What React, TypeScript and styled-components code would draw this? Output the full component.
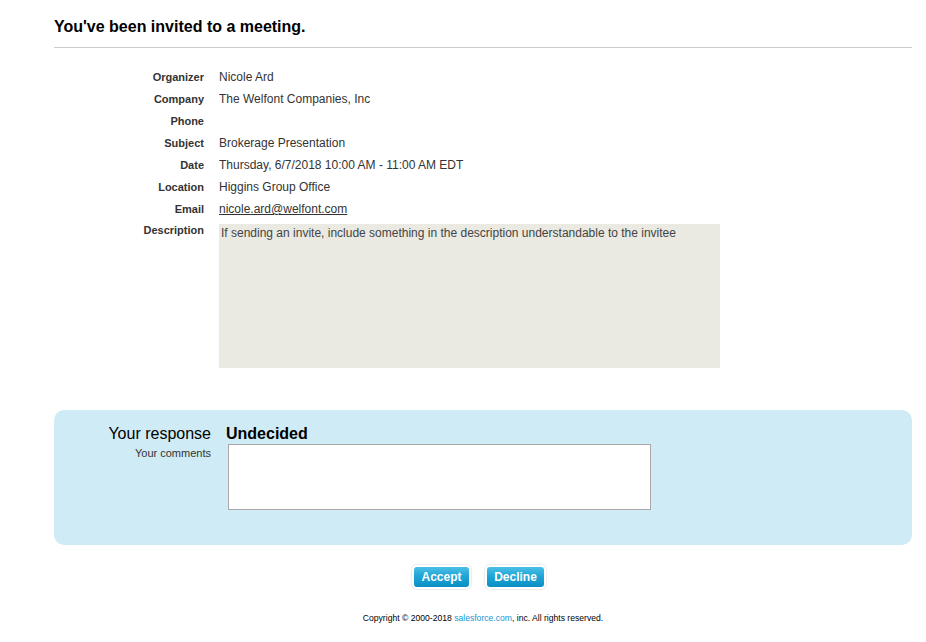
import React from 'react'
import styled, { createGlobalStyle } from 'styled-components'

const GlobalStyle = createGlobalStyle`
    body {
        margin: 0;
        background: #fff;
        font-family: "Liberation Sans", Arial, sans-serif;
        color: #333;
    }
`

const Page = styled.div`
    padding: 0 14px 0 54px;
`

const Heading = styled.h1`
    margin: 0;
    padding: 17px 0 10px;
    font-size: 16px;
    line-height: 20px;
    font-weight: bold;
    color: #000;
    border-bottom: 1px solid #cccccc;
`

const Details = styled.div`
    display: grid;
    grid-template-columns: 150px 1fr;
    column-gap: 15px;
    margin-top: 18px;
`

const Label = styled.div<{ $tall?: boolean }>`
    text-align: right;
    font-size: 11px;
    font-weight: bold;
    color: #333;
    line-height: ${p => (p.$tall ? '14px' : '22px')};
    margin-top: ${p => (p.$tall ? '3px' : '0')};
`

const Value = styled.div`
    font-size: 12px;
    line-height: 22px;
    color: #333;
    min-height: 22px;
`

const EmailLink = styled.a`
    color: #333;
    text-decoration: underline;
`

const DescriptionBox = styled.div`
    margin-top: 4px;
    width: 497px;
    height: 142px;
    padding: 2px 2px 0;
    background: #eae9e2;
    font-size: 12px;
    line-height: 14px;
    color: #444;
`

const ResponsePanel = styled.section`
    margin-top: 42px;
    height: 135px;
    box-sizing: border-box;
    padding-top: 14px;
    background: #cfecf6;
    border-radius: 10px;
    display: grid;
    grid-template-columns: 157px 1fr;
    column-gap: 15px;
    align-content: start;
`

const ResponseLabel = styled.div`
    text-align: right;
    font-size: 16px;
    line-height: 20px;
    color: #000;
`

const ResponseValue = styled.div`
    font-size: 16px;
    line-height: 20px;
    font-weight: bold;
    color: #000;
`

const CommentsLabel = styled.div`
    text-align: right;
    font-size: 11px;
    line-height: 14px;
    padding-top: 2px;
    color: #333;
`

const Comments = styled.textarea`
    margin-left: 2px;
    width: 423px;
    height: 66px;
    box-sizing: border-box;
    border: 1px solid #a9a9a9;
    background: #fff;
    resize: none;
    font-family: "Liberation Sans", Arial, sans-serif;
    font-size: 12px;
`

const Actions = styled.div`
    display: flex;
    justify-content: center;
    gap: 14px;
    margin-top: 20px;
    padding-right: 8px;
`

const Button = styled.button<{ $width: number }>`
    width: ${p => p.$width}px;
    height: 24px;
    padding: 0;
    border: 2px solid #fff;
    border-radius: 5px;
    box-shadow: 0 0 2px rgba(0, 0, 0, 0.25);
    background: linear-gradient(to bottom, #4cc0e6 0%, #20a5d6 45%, #0a8fc6 100%);
    color: #fff;
    font-family: "Liberation Sans", Arial, sans-serif;
    font-size: 12px;
    font-weight: bold;
    cursor: pointer;
`

const Footer = styled.footer`
    margin-top: 23px;
    text-align: center;
    font-size: 8.6px;
    line-height: 12px;
    color: #000;
    a {
        color: #1797d4;
        text-decoration: none;
    }
`

const details: [string, React.ReactNode][] = [
    ['Organizer', 'Nicole Ard'],
    ['Company', 'The Welfont Companies, Inc'],
    ['Phone', ''],
    ['Subject', 'Brokerage Presentation'],
    ['Date', 'Thursday, 6/7/2018 10:00 AM - 11:00 AM EDT'],
    ['Location', 'Higgins Group Office'],
    ['Email', <EmailLink href="#">nicole.ard@welfont.com</EmailLink>],
]

const App = () => {
    return (
        <>
            <GlobalStyle />
            <Page>
                <Heading>You've been invited to a meeting.</Heading>
                <Details>
                    {details.map(([label, value]) => (
                        <React.Fragment key={label}>
                            <Label>{label}</Label>
                            <Value>{value}</Value>
                        </React.Fragment>
                    ))}
                    <Label $tall>Description</Label>
                    <DescriptionBox>
                        If sending an invite, include something in the description understandable to the invitee
                    </DescriptionBox>
                </Details>
                <ResponsePanel>
                    <ResponseLabel>Your response</ResponseLabel>
                    <ResponseValue>Undecided</ResponseValue>
                    <CommentsLabel>Your comments</CommentsLabel>
                    <Comments />
                </ResponsePanel>
                <Actions>
                    <Button $width={59}>Accept</Button>
                    <Button $width={61}>Decline</Button>
                </Actions>
                <Footer>
                    Copyright © 2000-2018 <a href="#">salesforce.com</a>, inc. All rights reserved.
                </Footer>
            </Page>
        </>
    )
}

export default App
